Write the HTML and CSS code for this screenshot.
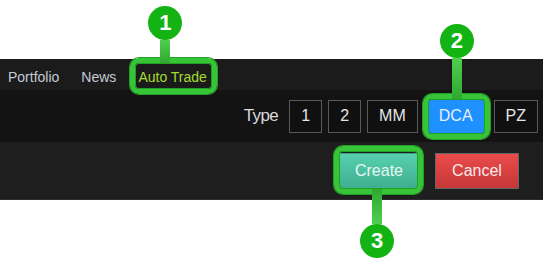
FILE: index.html
```html
<!doctype html>
<html>
<head>
    <title>Auto Trade</title>
    <link rel="stylesheet" href="styles.css">
</head>
<body>
    <div class="screen">
        <nav class="topnav">
            <a class="nav-link">Portfolio</a>
            <a class="nav-link">News</a>
            <a class="nav-link active">Auto Trade
                <span class="callout callout-nav">
                    <span class="pin pin-up pin-1">
                        <span class="pin-num">1</span>
                        <span class="pin-stem"></span>
                    </span>
                </span>
            </a>
        </nav>
        <div class="toolbar">
            <span class="type-label">Type</span>
            <div class="type-group">
                <button class="type-btn">1</button>
                <button class="type-btn">2</button>
                <button class="type-btn">MM</button>
                <button class="type-btn is-active">DCA
                    <span class="callout callout-type">
                        <span class="pin pin-up pin-2">
                            <span class="pin-num">2</span>
                            <span class="pin-stem"></span>
                        </span>
                    </span>
                </button>
                <button class="type-btn">PZ</button>
            </div>
        </div>
        <div class="panel">
            <div class="action">
                <button class="btn btn-create">Create</button>
                <span class="callout callout-create">
                    <span class="pin pin-down pin-3">
                        <span class="pin-stem"></span>
                        <span class="pin-num">3</span>
                    </span>
                </span>
            </div>
            <button class="btn btn-cancel">Cancel</button>
        </div>
    </div>
</body>
</html>
```

FILE: styles.css
```css
html, body {
    min-height: 100%;
}
body {
    margin: 0;
    min-height: 100vh;
    background-color: #fff;
    font-family: "Liberation Sans", Arial, sans-serif;
}
.screen {
    padding-top: 59px;
}

/* top navigation */
.topnav {
    display: flex;
    gap: 22px;
    height: 31px;
    padding-left: 8px;
    background-color: #1b1b1b;
}
.nav-link {
    position: relative;
    display: flex;
    align-items: center;
    padding-top: 5px;
    font-size: 14px;
    color: #c3cbd6;
}
.nav-link.active {
    color: #a6dc2e;
}

/* type selector */
.toolbar {
    display: flex;
    justify-content: flex-end;
    align-items: center;
    height: 52px;
    padding-right: 5px;
    background-color: #131313;
}
.type-label {
    margin-right: 11px;
    font-size: 17px;
    letter-spacing: -0.6px;
    color: #dadada;
}
.type-group {
    display: flex;
    gap: 6px;
}
.type-btn {
    position: relative;
    min-width: 33px;
    height: 33px;
    padding: 0 11px;
    border: 1px solid #595959;
    background-color: #101010;
    color: #e6e6e6;
    font-family: inherit;
    font-size: 16px;
}
.type-btn.is-active {
    padding: 0 14px;
    border-color: #1e90ff;
    background-color: #1e90ff;
    color: #e8f1ff;
}

/* form actions */
.panel {
    display: flex;
    justify-content: flex-end;
    align-items: center;
    gap: 14px;
    height: 57px;
    padding-right: 24px;
    background-color: #1e1e1e;
    border-bottom: 1px solid #2c2c2c;
}
.action {
    position: relative;
    display: flex;
}
.btn {
    width: 84px;
    height: 36px;
    font-family: inherit;
    font-size: 16px;
}
.btn-create {
    border: 1px solid #3c9f84;
    background: linear-gradient(#57d0b0, #3fae90);
    color: #e8f7f1;
}
.btn-cancel {
    border: 1px solid #666;
    background: linear-gradient(#eb4b4b, #c53737);
    color: #fbeaea;
}

/* help callouts */
.callout {
    position: absolute;
    z-index: 2;
    border: 5px solid #38c438;
    border-radius: 9px;
    box-shadow: 0 0 0 1px #22a022, inset 0 0 0 1px #22a022;
}
.callout-nav {
    top: -1px;
    bottom: -4px;
    left: -8px;
    right: -10px;
}
.callout-type {
    top: -7px;
    bottom: -7px;
    left: -2px;
    right: -3px;
}
.callout-create {
    top: -7px;
    bottom: -5px;
    left: -3px;
    right: -2px;
}
.pin {
    position: absolute;
    display: flex;
    flex-direction: column;
    align-items: center;
    width: 34px;
}
.pin-up {
    bottom: 100%;
}
.pin-down {
    top: 100%;
}
.pin-num {
    width: 34px;
    height: 34px;
    border-radius: 50%;
    background-color: #12b312;
    color: #fff;
    font-size: 22px;
    font-weight: bold;
    line-height: 34px;
    text-align: center;
}
.pin-stem {
    width: 10px;
    background: linear-gradient(#4fcf4f, #2fa82f);
}
.pin-down .pin-stem {
    background: linear-gradient(#2fa82f, #4fcf4f);
}
.pin-1 {
    left: 13px;
}
.pin-1 .pin-stem {
    height: 23px;
}
.pin-2 {
    left: 12px;
}
.pin-2 .pin-stem {
    height: 41px;
}
.pin-3 {
    left: 21px;
}
.pin-3 .pin-stem {
    height: 35px;
}
```
